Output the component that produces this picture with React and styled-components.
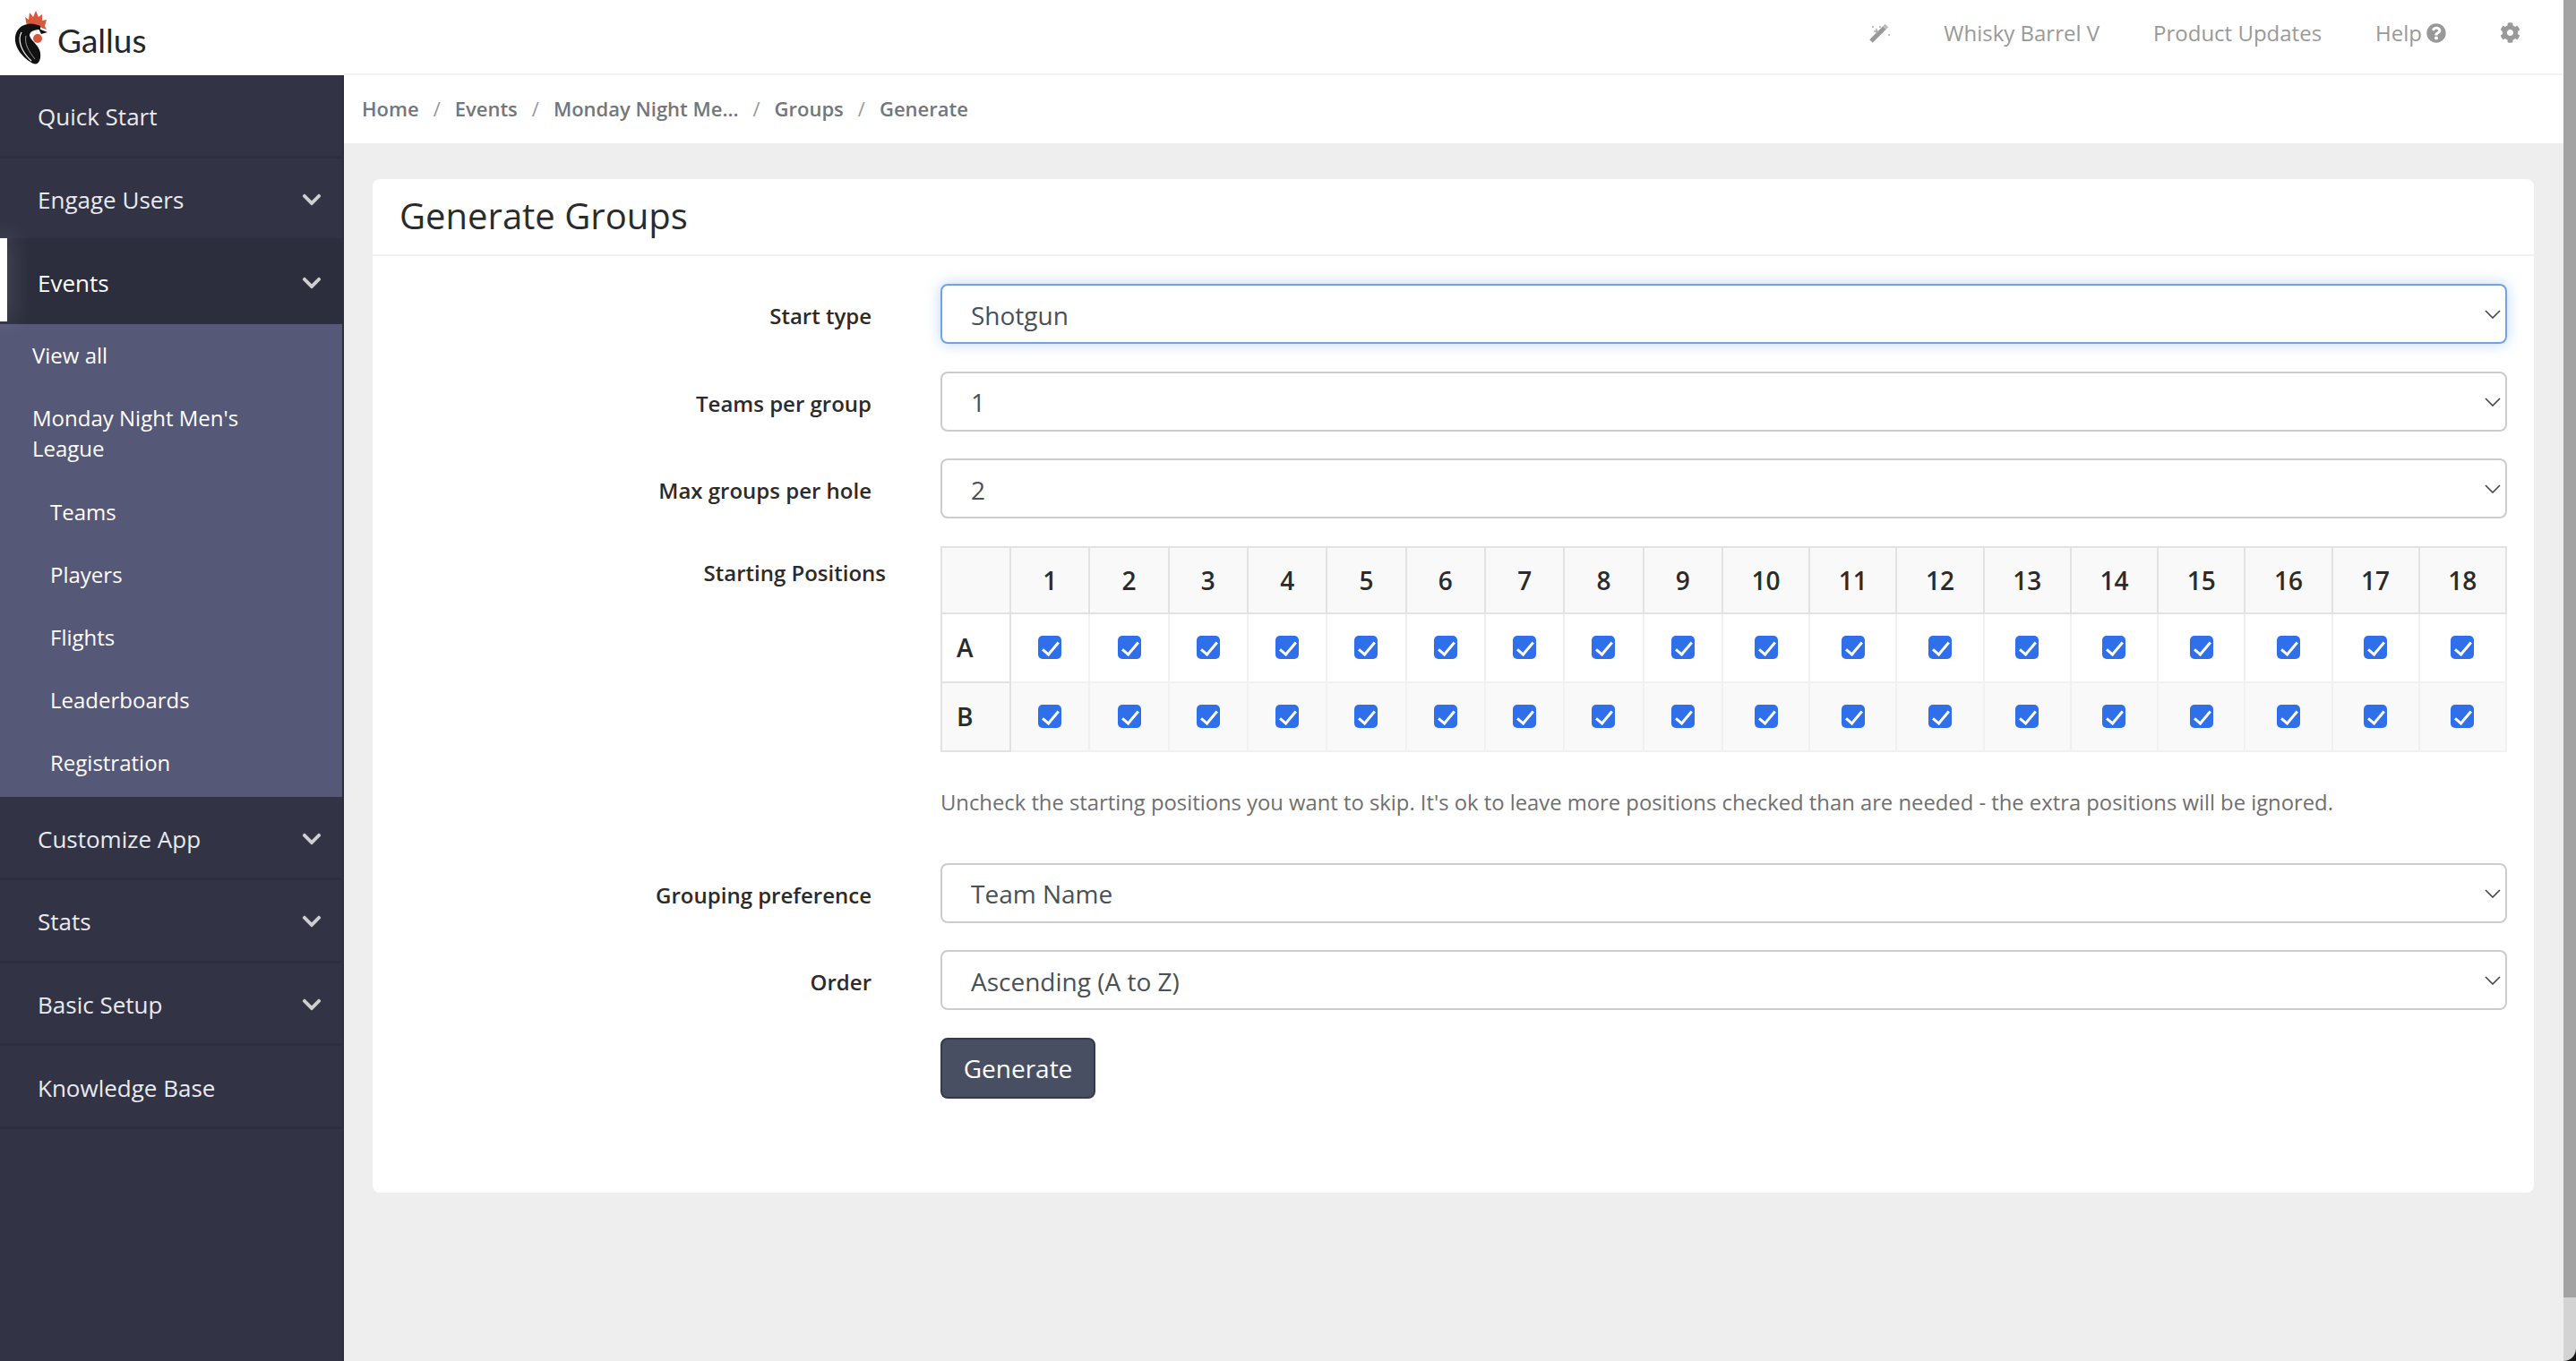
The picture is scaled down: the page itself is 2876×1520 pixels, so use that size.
import React from 'react';
import styled, { createGlobalStyle } from 'styled-components';
import { FaChevronDown, FaCog, FaQuestionCircle } from 'react-icons/fa';

const GlobalStyle = createGlobalStyle`
  html, body {
    margin: 0;
    padding: 0;
    height: 100%;
    overflow: hidden;
    font-family: "Open Sans", "Liberation Sans", sans-serif;
  }
  * {
    box-sizing: border-box;
  }
`;

const navBefore = [
  { label: 'Quick Start' },
  { label: 'Engage Users', arrow: true },
];
const navAfter = [
  { label: 'Customize App', arrow: true },
  { label: 'Stats', arrow: true },
  { label: 'Basic Setup', arrow: true },
  { label: 'Knowledge Base' },
];
const crumbs = ['Home', 'Events', 'Monday Night Me...', 'Groups', 'Generate'];
const holes = Array.from({ length: 18 }, (_, i) => i + 1);

function Rooster() {
  return (
    <svg width="50" height="70" viewBox="10 8 50 70">
      <path
        d="M30 30 L28 20 L32 23 L33 15 L37 20 L40 13 L43 20 L47 17 L47 24 L52 23 L50 30 L52 34 L46 32 C42 27 35 27 30 30 Z"
        fill="#d9583b"
      />
      <path
        d="M45 30 C36 25 22 27 18 38 C14 49 21 63 37 72 C43 74 46 68 45 60 C44 52 35 47 33 41 C33 36 38 34 45 34 Z"
        fill="#111"
      />
      <path d="M24 37 C19 46 24 59 35 69" fill="none" stroke="#fff" strokeWidth="1.2" />
      <path d="M29 41 C27 50 32 58 39 67" fill="none" stroke="#999" strokeWidth="1" />
      <path d="M43 33 L53 37 L46 39 Z" fill="#111" />
      <circle cx="42" cy="44" r="5" fill="#d9583b" />
    </svg>
  );
}

function Wand() {
  return (
    <svg width="24" height="24" viewBox="0 0 24 24">
      <path d="M3 21 L18 6" stroke="#999" strokeWidth="5" />
      <path d="M18 6 L20.5 3.5" stroke="#bbb" strokeWidth="5" />
      <path d="M9 7 V13 M6 10 H12" stroke="#aaa" strokeWidth="1.4" />
      <circle cx="5" cy="5" r="1" fill="#aaa" />
      <circle cx="13" cy="5" r="1" fill="#aaa" />
      <circle cx="23" cy="14" r="1" fill="#aaa" />
    </svg>
  );
}

function SelectField({ value, focused }) {
  return (
    <SelectWrap>
      <Select defaultValue={value} $focused={focused}>
        <option>{value}</option>
      </Select>
      <SelectArrow width="18" height="10" viewBox="0 0 18 10">
        <path d="M1 1 L9 9 L17 1" fill="none" stroke="#444" strokeWidth="1.6" />
      </SelectArrow>
    </SelectWrap>
  );
}

function App() {
  return (
    <Page>
      <GlobalStyle />
      <Main>
        <TopBar>
          <Brand>
            <Rooster />
            <BrandName>Gallus</BrandName>
          </Brand>
          <TopNav>
            <TopIcon>
              <Wand />
            </TopIcon>
            <TopLink>Whisky Barrel V</TopLink>
            <TopLink>Product Updates</TopLink>
            <TopLink>
              Help <FaQuestionCircle size={22} />
            </TopLink>
            <TopIcon>
              <FaCog />
            </TopIcon>
          </TopNav>
        </TopBar>
        <Body>
          <Sidebar>
            {navBefore.map((item) => (
              <NavItem key={item.label}>
                {item.label}
                {item.arrow && <FaChevronDown size={24} color="#cfcfcf" />}
              </NavItem>
            ))}
            <NavItem $active>
              Events
              <FaChevronDown size={24} color="#cfcfcf" />
            </NavItem>
            <SubNav>
              <SubItem>View all</SubItem>
              <SubItem>Monday Night Men's League</SubItem>
              <SubItem $nested>Teams</SubItem>
              <SubItem $nested>Players</SubItem>
              <SubItem $nested>Flights</SubItem>
              <SubItem $nested>Leaderboards</SubItem>
              <SubItem $nested>Registration</SubItem>
            </SubNav>
            {navAfter.map((item) => (
              <NavItem key={item.label}>
                {item.label}
                {item.arrow && <FaChevronDown size={24} color="#cfcfcf" />}
              </NavItem>
            ))}
          </Sidebar>
          <Content>
            <Breadcrumb>
              {crumbs.map((c, i) => (
                <React.Fragment key={c}>
                  {i > 0 && <CrumbSep>/</CrumbSep>}
                  <span>{c}</span>
                </React.Fragment>
              ))}
            </Breadcrumb>
            <Workspace>
              <Card>
                <CardTitle>Generate Groups</CardTitle>
                <Form>
                  <Row>
                    <Label>Start type</Label>
                    <SelectField value="Shotgun" focused />
                  </Row>
                  <Row>
                    <Label>Teams per group</Label>
                    <SelectField value="1" />
                  </Row>
                  <Row>
                    <Label>Max groups per hole</Label>
                    <SelectField value="2" />
                  </Row>
                  <Row $tight>
                    <Label $table>Starting Positions</Label>
                    <div>
                      <Table>
                        <colgroup>
                          <col width="77" />
                          {holes.map((h) => (
                            <col key={h} width={h < 10 ? 88.3 : 97.2} />
                          ))}
                        </colgroup>
                        <thead>
                          <tr>
                            <HeadCell />
                            {holes.map((h) => (
                              <HeadCell key={h}>{h}</HeadCell>
                            ))}
                          </tr>
                        </thead>
                        <tbody>
                          {['A', 'B'].map((pos, idx) => (
                            <PosRow key={pos} $odd={idx === 1}>
                              <PosName>{pos}</PosName>
                              {holes.map((h) => (
                                <PosCell key={h}>
                                  <Check type="checkbox" defaultChecked />
                                </PosCell>
                              ))}
                            </PosRow>
                          ))}
                        </tbody>
                      </Table>
                      <Help>
                        Uncheck the starting positions you want to skip. It's ok to leave more positions checked than are needed - the extra positions will be ignored.
                      </Help>
                    </div>
                  </Row>
                  <Row>
                    <Label>Grouping preference</Label>
                    <SelectField value="Team Name" />
                  </Row>
                  <Row>
                    <Label>Order</Label>
                    <SelectField value="Ascending (A to Z)" />
                  </Row>
                  <Row>
                    <span />
                    <div>
                      <SubmitBtn type="button">Generate</SubmitBtn>
                    </div>
                  </Row>
                </Form>
              </Card>
            </Workspace>
          </Content>
        </Body>
      </Main>
      <ScrollTrack>
        <ScrollThumb />
      </ScrollTrack>
    </Page>
  );
}

export default App;

const Page = styled.div`
  display: flex;
  height: 1520px;
  background: #161616;
  overflow: hidden;
`;

const Main = styled.div`
  flex: 1;
  min-width: 0;
  display: flex;
  flex-direction: column;
  background: #eee;
`;

const ScrollTrack = styled.div`
  flex: 0 0 14px;
  background: #d3d3d3;
  border-bottom-right-radius: 16px;
`;

const ScrollThumb = styled.div`
  height: 1449px;
  background: #a3a3a3;
`;

const TopBar = styled.header`
  display: flex;
  height: 84px;
  background: #fff;
`;

const Brand = styled.div`
  flex: 0 0 384px;
  display: flex;
  align-items: center;
  padding-left: 10px;
  gap: 4px;
`;

const BrandName = styled.span`
  margin-top: 5px;
  font-family: Lato, "Liberation Sans", sans-serif;
  font-size: 37px;
  color: #262626;
`;

const TopNav = styled.nav`
  flex: 1;
  display: flex;
  justify-content: flex-end;
  align-items: center;
  gap: 60px;
  padding: 0 48px 9px 0;
  border-bottom: 2px solid #f3f3f3;
`;

const TopLink = styled.a`
  display: flex;
  align-items: center;
  gap: 5px;
  font-size: 24px;
  color: #999;
`;

const TopIcon = styled.span`
  display: flex;
  font-size: 23px;
  color: #999;
`;

const Body = styled.div`
  flex: 1;
  display: flex;
  min-height: 0;
`;

const Sidebar = styled.aside`
  flex: 0 0 384px;
  background: #323345;
  border-right: 2px solid #2b2c3c;
`;

const NavItem = styled.a`
  position: relative;
  display: flex;
  align-items: center;
  justify-content: space-between;
  height: 92.7px;
  padding: 3px 22px 0 42px;
  font-size: 26px;
  color: ${(p) => (p.$active ? '#fff' : '#e8eaf0')};
  background: ${(p) => (p.$active ? '#2c2d3d' : 'transparent')};
  border-bottom: 3px solid #2d2e3f;

  ${(p) =>
    p.$active &&
    `
    &::before {
      content: '';
      position: absolute;
      left: 0;
      top: -3px;
      bottom: 0;
      width: 8px;
      background: #fff;
      box-shadow: 0 0 26px rgba(255, 255, 255, 0.35);
    }
  `}
`;

const SubNav = styled.div`
  background: #565878;
  padding-bottom: 3px;
`;

const SubItem = styled.a`
  display: block;
  padding: 18.1px 40px 18.1px ${(p) => (p.$nested ? '56px' : '36px')};
  font-size: 24px;
  line-height: 34px;
  color: #fff;
`;

const Content = styled.main`
  flex: 1;
  min-width: 0;
  display: flex;
  flex-direction: column;
`;

const Breadcrumb = styled.div`
  display: flex;
  align-items: center;
  height: 76px;
  padding: 0 20px 2px;
  background: #fff;
  font-size: 22px;
  font-weight: 600;
  color: #73767c;
`;

const CrumbSep = styled.span`
  margin: 0 16px;
  font-weight: 400;
  color: #999;
`;

const Workspace = styled.div`
  flex: 1;
  padding: 40px 33px 0 32px;
`;

const Card = styled.section`
  height: 1132px;
  background: #fff;
  border-radius: 8px;
`;

const CardTitle = styled.h1`
  margin: 0;
  height: 86px;
  padding: 0 30px 3px;
  display: flex;
  align-items: center;
  font-size: 40px;
  font-weight: 400;
  color: #2b2b2b;
  border-bottom: 2px solid #f1f1f1;
`;

const Form = styled.form`
  padding: 31px 30px 0 0;
`;

const Row = styled.div`
  display: grid;
  grid-template-columns: 634px 1fr;
  margin-bottom: ${(p) => (p.$tight ? '51px' : '30.5px')};
`;

const Label = styled.label`
  padding-right: ${(p) => (p.$table ? '61px' : '77px')};
  padding-top: ${(p) => (p.$table ? '13px' : '19px')};
  text-align: right;
  font-size: 24px;
  line-height: 34px;
  font-weight: 600;
  color: #2b2b2b;
`;

const SelectWrap = styled.div`
  position: relative;
`;

const Select = styled.select`
  display: block;
  width: 100%;
  height: 67px;
  padding: 2px 40px 0 32px;
  appearance: none;
  background: #fff;
  font-family: inherit;
  font-size: 28px;
  color: #495057;
  border: 2px solid ${(p) => (p.$focused ? '#6ea4e6' : '#ccc')};
  border-radius: 8px;
  outline: none;
  box-shadow: ${(p) => (p.$focused ? '0 0 16px rgba(90, 155, 240, 0.4)' : 'none')};
`;

const SelectArrow = styled.svg`
  position: absolute;
  right: 7px;
  top: 29px;
  pointer-events: none;
`;

const Table = styled.table`
  width: 100%;
  table-layout: fixed;
  border-collapse: collapse;
`;

const HeadCell = styled.th`
  height: 74px;
  background: #f9f9f9;
  border: 2px solid #e2e2e2;
  font-size: 28px;
  font-weight: 600;
  color: #2b2b2b;
`;

const PosRow = styled.tr`
  background: ${(p) => (p.$odd ? '#f9f9f9' : '#fff')};
`;

const PosName = styled.td`
  height: 77px;
  padding-left: 16px;
  border: 2px solid #e2e2e2;
  font-size: 28px;
  font-weight: 600;
  color: #2b2b2b;
`;

const PosCell = styled.td`
  height: 77px;
  text-align: center;
  border: 2px solid #f1f1f1;
`;

const Check = styled.input`
  position: relative;
  appearance: none;
  display: inline-block;
  margin: 0;
  width: 26px;
  height: 26px;
  vertical-align: middle;
  background: #2f6fe9;
  border-radius: 5px;

  &::after {
    content: '';
    position: absolute;
    left: 9px;
    top: 3px;
    width: 7px;
    height: 16px;
    border: solid #fff;
    border-width: 0 3.5px 3.5px 0;
    transform: rotate(40deg);
  }
`;

const Help = styled.p`
  margin: 39px 0 0;
  font-size: 23.8px;
  line-height: 34px;
  color: #6f6f6f;
`;

const SubmitBtn = styled.button`
  width: 173px;
  height: 68px;
  padding: 0;
  background: #484f63;
  border: 2px solid #343a4b;
  border-radius: 8px;
  font-family: inherit;
  font-size: 28px;
  color: #fff;
`;
